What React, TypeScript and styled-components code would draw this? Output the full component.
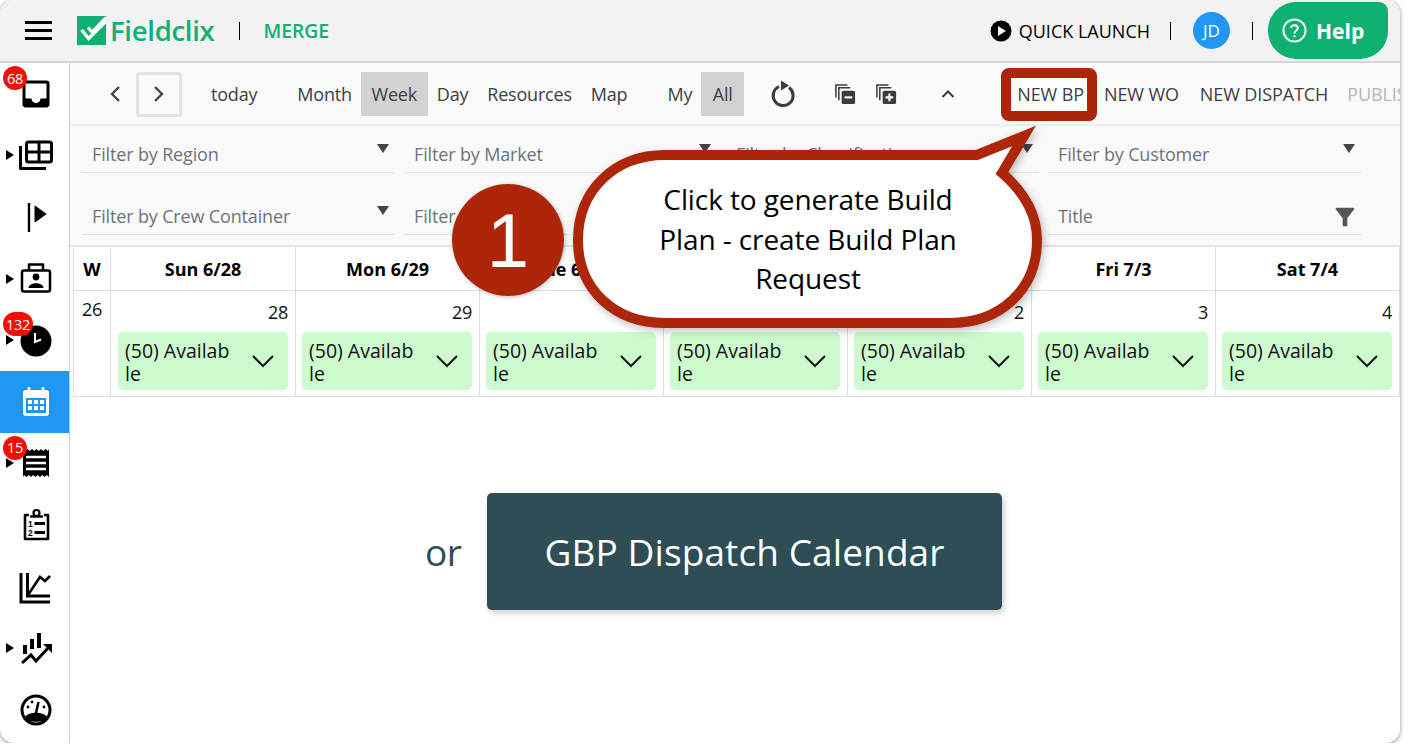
import React from "react";
import styled, { createGlobalStyle } from "styled-components";
import { MdInbox, MdFilterAlt } from "react-icons/md";

const GlobalStyle = createGlobalStyle`
  html, body { margin: 0; padding: 0; background: #fff; }
  body { font-family: "Open Sans", "Noto Sans", sans-serif; }
  * { box-sizing: border-box; }
`;

const GREEN = "#0fb072";
const RED = "#ae2609";

const days = [
  { label: "Sun 6/28", num: "28" },
  { label: "Mon 6/29", num: "29" },
  { label: "Tue 6/30", num: "30" },
  { label: "Wed 7/1", num: "1" },
  { label: "Thu 7/2", num: "2" },
  { label: "Fri 7/3", num: "3" },
  { label: "Sat 7/4", num: "4" },
];

const filters = [
  "Filter by Region",
  "Filter by Market",
  "Filter by Classification",
  "Filter by Customer",
  "Filter by Crew Container",
  "Filter by Manager",
  "Filter by Status",
];

const Icon: React.FC<{ children: React.ReactNode; color?: string }> = ({ children, color = "#000" }) => (
  <svg width="36" height="36" viewBox="0 0 36 36" fill="none" stroke={color} strokeWidth="3" strokeLinejoin="round">
    {children}
  </svg>
);

const sideItems = [
  { key: "inbox", badge: "68", icon: <MdInbox size={36} color="#000" /> },
  {
    key: "grid",
    caret: true,
    icon: (
      <Icon>
        <rect x="8.5" y="5" width="25" height="20" rx="2" />
        <path d="M8.5 15H33.5M21 5V25" />
        <path d="M2.5 9V31.5H28" />
      </Icon>
    ),
  },
  {
    key: "flag",
    icon: (
      <Icon>
        <path d="M11 4V33" strokeWidth="2.4" />
        <path d="M17 7L28 15L17 23Z" fill="#000" strokeWidth="1" />
      </Icon>
    ),
  },
  {
    key: "badge",
    caret: true,
    icon: (
      <Icon>
        <rect x="4" y="9.5" width="28" height="21" rx="2" strokeWidth="2.5" />
        <path d="M11 9.5V3.5H25V9.5" strokeWidth="2.5" />
        <circle cx="18" cy="16" r="3.4" fill="#000" stroke="none" />
        <path d="M10.5 27C10.5 20.5 25.5 20.5 25.5 27Z" fill="#000" stroke="none" />
      </Icon>
    ),
  },
  {
    key: "clock",
    caret: true,
    badge: "132",
    icon: (
      <Icon>
        <circle cx="18" cy="19" r="15.5" fill="#000" stroke="none" />
        <path d="M17 11V20L23 17.5" stroke="#fff" strokeWidth="2" strokeLinejoin="miter" />
      </Icon>
    ),
  },
  {
    key: "calendar",
    active: true,
    icon: (
      <Icon color="#fff">
        <rect x="5" y="6" width="26" height="26" rx="3" fill="#fff" stroke="none" />
        <path d="M11 3V8M25 3V8" strokeWidth="2.5" />
        <path d="M8 14H28V29H8Z" fill="#2196f3" stroke="none" />
        <path
          d="M10 16h4v4h-4zM16 16h4v4h-4zM22 16h4v4h-4zM10 22h4v4h-4zM16 22h4v4h-4zM22 22h4v4h-4z"
          fill="#fff"
          stroke="none"
        />
      </Icon>
    ),
  },
  {
    key: "receipt",
    caret: true,
    badge: "15",
    icon: (
      <Icon>
        <path
          d="M5 4l2.25 2 2.25-2 2.25 2 2.25-2 2.25 2 2.25-2 2.25 2 2.25-2 2.25 2 2.25-2 2.25 2L31 4V32l-2.25-2-2.25 2-2.25-2-2.25 2-2.25-2-2.25 2-2.25-2-2.25 2-2.25-2-2.25 2-2.25-2L5 32Z"
          fill="#000"
          stroke="none"
        />
        <path d="M8 12H28M8 18H28M8 24H28" stroke="#fff" strokeWidth="2.5" />
      </Icon>
    ),
  },
  {
    key: "clipboard",
    icon: (
      <Icon>
        <path d="M11 8H7V32H30V8H26" strokeWidth="2.6" />
        <circle cx="18.5" cy="6" r="3" strokeWidth="2.2" />
        <path d="M12 9.5H25" strokeWidth="2.4" />
        <text x="10" y="19.5" fontFamily="Liberation Sans" fontWeight="700" fontSize="8.5" fill="#000" stroke="none">1</text>
        <text x="10" y="28.5" fontFamily="Liberation Sans" fontWeight="700" fontSize="8.5" fill="#000" stroke="none">2</text>
        <path d="M16.5 16.5H27M16.5 25.5H27" strokeWidth="3" />
      </Icon>
    ),
  },
  {
    key: "chart",
    icon: (
      <Icon>
        <path d="M3 4V33H32" strokeLinejoin="miter" />
        <path d="M9.5 4V27H32" strokeLinejoin="miter" />
        <path d="M10 26L22 8L27 12L32 7" strokeLinejoin="miter" strokeWidth="2.6" />
      </Icon>
    ),
  },
  {
    key: "trend",
    caret: true,
    icon: (
      <Icon>
        <path d="M7 15V24M14 9V19M21 3V18" strokeWidth="4" strokeLinejoin="miter" />
        <path d="M4 33L13 25L18 31L31 17" strokeWidth="3" strokeLinejoin="miter" />
        <path d="M25 14H34V23Z" fill="#000" stroke="none" />
      </Icon>
    ),
  },
  {
    key: "gauge",
    icon: (
      <Icon>
        <circle cx="18" cy="18" r="14" />
        <path d="M6 26C10 19 26 19 30 26C26 31 10 31 6 26Z" fill="#000" stroke="none" />
        <path d="M18 21L20.5 10" strokeWidth="2.5" />
        <circle cx="10" cy="15" r="1.4" fill="#000" stroke="none" />
        <circle cx="14" cy="10" r="1.4" fill="#000" stroke="none" />
        <circle cx="26" cy="15" r="1.4" fill="#000" stroke="none" />
      </Icon>
    ),
  },
];

export default function App() {
  return (
    <>
      <GlobalStyle />
      <Window>
        <Header>
          <HeaderLeft>
            <Hamburger>
              <span />
              <span />
              <span />
            </Hamburger>
            <svg width="29" height="29" viewBox="0 0 29 29">
              <rect width="29" height="29" fill={GREEN} />
              <path d="M4.5 14L11.7 22.5L29 5" fill="none" stroke="#fff" strokeWidth="3.4" />
              <path d="M11 11.5L15 16L29 1.5" fill="none" stroke="#fff" strokeWidth="3" />
            </svg>
            <Brand>Fieldclix</Brand>
            <Divider $left={25} $right={23} />
            <Merge>MERGE</Merge>
          </HeaderLeft>
          <HeaderRight>
            <svg width="22" height="22" viewBox="0 0 22 22">
              <circle cx="11" cy="11" r="10.5" fill="#000" />
              <path d="M8 6L16 11L8 16Z" fill="#f2f2f2" />
            </svg>
            <QuickLaunch>QUICK LAUNCH</QuickLaunch>
            <Divider $left={20} $right={22} />
            <Avatar>JD</Avatar>
            <Divider $left={22} $right={15} />
            <HelpButton>
              <svg width="25" height="25" viewBox="0 0 26 26" fill="none" stroke="#fff" strokeWidth="2">
                <circle cx="13" cy="13" r="11.5" />
                <path d="M9.5 10.5C9.5 6.5 16.5 6.5 16.5 10.5C16.5 13 13 13 13 16" />
                <path d="M13 18V20" />
              </svg>
              Help
            </HelpButton>
          </HeaderRight>
        </Header>
        <Body>
          <Sidebar>
            {sideItems.map((item) => (
              <SideItem key={item.key} $active={item.active} $caret={item.caret}>
                {item.badge && <Badge>{item.badge}</Badge>}
                {item.icon}
              </SideItem>
            ))}
          </Sidebar>
          <Main>
            <Toolbar>
              <NavIcon>
                <svg width="14" height="18" viewBox="0 0 14 18" fill="none" stroke="#444" strokeWidth="2.4">
                  <path d="M11 2L4 9L11 16" />
                </svg>
              </NavIcon>
              <NextBox>
                <svg width="14" height="18" viewBox="0 0 14 18" fill="none" stroke="#444" strokeWidth="2.4">
                  <path d="M3 2L10 9L3 16" />
                </svg>
              </NextBox>
              <ToolText $ml={29}>today</ToolText>
              <ToolText $ml={40}>Month</ToolText>
              <ToolToggle $ml={9} $w={67}>Week</ToolToggle>
              <ToolText $ml={9}>Day</ToolText>
              <ToolText $ml={19}>Resources</ToolText>
              <ToolText $ml={19}>Map</ToolText>
              <ToolText $ml={40}>My</ToolText>
              <ToolToggle $ml={9} $w={43}>All</ToolToggle>
              <ToolGlyph $ml={26}>
                <svg width="26" height="28" viewBox="0 0 26 28" fill="none" stroke="#3c3c3c" strokeWidth="3">
                  <path d="M9 6.5A10 10 0 1 0 19 7.5" />
                  <path d="M11 0.5L19 5.5L11 10.5Z" fill="#3c3c3c" stroke="none" />
                </svg>
              </ToolGlyph>
              <ToolGlyph $ml={38}>
                <svg width="23" height="23" viewBox="0 0 24 24" fill="none" stroke="#3c3c3c" strokeWidth="1.6">
                  <path d="M14 2H2V15" />
                  <path d="M17 5H5V18" />
                  <rect x="8" y="8" width="14" height="14" rx="2" fill="#3c3c3c" stroke="none" />
                  <path d="M11 15H19" stroke="#fff" strokeWidth="2.2" />
                </svg>
              </ToolGlyph>
              <ToolGlyph $ml={18}>
                <svg width="23" height="23" viewBox="0 0 24 24" fill="none" stroke="#3c3c3c" strokeWidth="1.6">
                  <path d="M14 2H2V15" />
                  <path d="M17 5H5V18" />
                  <rect x="8" y="8" width="14" height="14" rx="2" fill="#3c3c3c" stroke="none" />
                  <path d="M11 15H19M15 11V19" stroke="#fff" strokeWidth="2.2" />
                </svg>
              </ToolGlyph>
              <ToolGlyph $ml={42}>
                <svg width="16" height="12" viewBox="0 0 16 12" fill="none" stroke="#3c3c3c" strokeWidth="2">
                  <path d="M2.5 9L8 3.5L13.5 9" />
                </svg>
              </ToolGlyph>
              <ActionText $ml={61} $highlight>NEW BP</ActionText>
              <ActionText $ml={20}>NEW WO</ActionText>
              <ActionText $ml={21}>NEW DISPATCH</ActionText>
              <ActionText $ml={19} $disabled>PUBLISH</ActionText>
            </Toolbar>
            <Filters>
              {filters.map((f) => (
                <FilterField key={f}>
                  <span>{f}</span>
                  <FilterCaret />
                </FilterField>
              ))}
              <FilterField>
                <span>Title</span>
                <FilterGlyph>
                  <MdFilterAlt size={28} color="#555" />
                </FilterGlyph>
              </FilterField>
            </Filters>
            <Calendar>
              <HeadCell>W</HeadCell>
              {days.map((d) => (
                <HeadCell key={d.label}>{d.label}</HeadCell>
              ))}
              <WeekCell>26</WeekCell>
              {days.map((d) => (
                <DayCell key={d.label}>
                  <DayNum>{d.num}</DayNum>
                  <Chip>
                    <ChipText>(50) Available</ChipText>
                    <svg width="24" height="14" viewBox="0 0 24 14" fill="none" stroke="#111" strokeWidth="2">
                      <path d="M2 2L12 12L22 2" />
                    </svg>
                  </Chip>
                </DayCell>
              ))}
            </Calendar>
            <Cta>
              <Or>or</Or>
              <GbpButton>GBP Dispatch Calendar</GbpButton>
            </Cta>
          </Main>
        </Body>
        <StepCircle>1</StepCircle>
        <Callout>
          <svg width="490" height="220" viewBox="570 118 490 220">
            <path
              d="M665 155H977L1024 136L1002 173C1024 192 1037 214 1037 240C1037 290 1000 323 950 323H665C615 323 578 290 578 240C578 190 615 155 665 155Z"
              fill="#fff"
              stroke={RED}
              strokeWidth="10"
              strokeLinejoin="miter"
              strokeMiterlimit="10"
            />
          </svg>
          <CalloutText>
            Click to generate Build
            <br />
            Plan - create Build Plan
            <br />
            Request
          </CalloutText>
        </Callout>
      </Window>
    </>
  );
}

const Window = styled.div`
  position: relative;
  width: 1400px;
  height: 743px;
  background: #fff;
  border-radius: 14px;
  overflow: hidden;
  box-shadow: 0 1px 4px rgba(0, 0, 0, 0.45);
`;

const Header = styled.header`
  height: 63px;
  background: #f2f2f2;
  border-bottom: 2px solid #d6d6d6;
  display: flex;
  align-items: center;
  justify-content: space-between;
  padding-left: 25px;
`;

const HeaderLeft = styled.div`
  display: flex;
  align-items: center;
`;

const HeaderRight = styled.div`
  display: flex;
  align-items: center;
  padding-right: 12px;
`;

const Hamburger = styled.div`
  width: 27px;
  margin-right: 25px;
  display: flex;
  flex-direction: column;
  gap: 5px;
  span {
    height: 3px;
    background: #000;
  }
`;

const Brand = styled.div`
  margin-left: 4px;
  color: ${GREEN};
  font-size: 27.5px;
  font-weight: 600;
  letter-spacing: -0.3px;
`;

const Merge = styled.div`
  color: ${GREEN};
  font-size: 19.3px;
  font-weight: 600;
`;

const Divider = styled.div<{ $left: number; $right: number }>`
  width: 1px;
  height: 18px;
  background: #000;
  margin: 0 ${(p) => p.$right}px 0 ${(p) => p.$left}px;
`;

const QuickLaunch = styled.div`
  margin-left: 7px;
  font-size: 18px;
  color: #000;
`;

const Avatar = styled.div`
  width: 37px;
  height: 37px;
  border-radius: 50%;
  background: #2196f3;
  color: #fff;
  font-size: 17px;
  display: flex;
  align-items: center;
  justify-content: center;
`;

const HelpButton = styled.div`
  width: 120px;
  height: 57px;
  background: ${GREEN};
  border-radius: 28px 9px 28px 28px;
  color: #fff;
  font-size: 21px;
  font-weight: 700;
  display: flex;
  align-items: center;
  padding-left: 14px;
  gap: 9px;
`;

const Body = styled.div`
  display: flex;
  height: 680px;
`;

const Sidebar = styled.nav`
  width: 70px;
  flex: none;
  border-right: 1px solid #ccc;
`;

const SideItem = styled.div<{ $active?: boolean; $caret?: boolean }>`
  position: relative;
  height: 61.6px;
  display: flex;
  align-items: center;
  justify-content: center;
  padding-left: 3px;
  background: ${(p) => (p.$active ? "#2196f3" : "transparent")};
  &::before {
    content: "";
    display: ${(p) => (p.$caret ? "block" : "none")};
    position: absolute;
    left: 6px;
    top: 50%;
    margin-top: -5px;
    border-left: 8px solid #000;
    border-top: 5px solid transparent;
    border-bottom: 5px solid transparent;
  }
`;

const Badge = styled.span`
  position: absolute;
  left: 3px;
  top: 3px;
  min-width: 24px;
  height: 24px;
  padding: 0 3px;
  z-index: 1;
  border-radius: 12px;
  background: #f01005;
  color: #fff;
  font-size: 14.5px;
  display: flex;
  align-items: center;
  justify-content: center;
  letter-spacing: -0.3px;
`;

const Main = styled.main`
  flex: 1;
  min-width: 0;
  overflow: hidden;
`;

const Toolbar = styled.div`
  height: 63px;
  background: #fafafa;
  border-bottom: 2px solid #eee;
  display: flex;
  align-items: center;
  padding: 1px 0 0 36px;
  white-space: nowrap;
  overflow: hidden;
  color: #3c4043;
  font-size: 18px;
  > * {
    flex: none;
  }
`;

const NavIcon = styled.div`
  width: 18px;
  display: flex;
  justify-content: center;
`;

const NextBox = styled.div`
  width: 46px;
  height: 45px;
  margin-left: 12px;
  border: 3px solid #e3e3e3;
  border-radius: 3px;
  display: flex;
  align-items: center;
  justify-content: center;
`;

const ToolText = styled.div<{ $ml: number }>`
  margin-left: ${(p) => p.$ml}px;
  letter-spacing: -0.2px;
`;

const ToolToggle = styled.div<{ $ml: number; $w: number }>`
  margin-left: ${(p) => p.$ml}px;
  width: ${(p) => p.$w}px;
  height: 44px;
  background: #d2d2d2;
  display: flex;
  align-items: center;
  justify-content: center;
  letter-spacing: -0.2px;
`;

const ToolGlyph = styled.div<{ $ml: number }>`
  margin-left: ${(p) => p.$ml}px;
  display: flex;
`;

const ActionText = styled.div<{ $ml: number; $disabled?: boolean; $highlight?: boolean }>`
  position: relative;
  margin-left: ${(p) => p.$ml}px;
  letter-spacing: -0.1px;
  color: ${(p) => (p.$disabled ? "#b5b5b5" : "#3c4043")};
  z-index: ${(p) => (p.$highlight ? 1 : "auto")};
  &::before {
    content: "";
    display: ${(p) => (p.$highlight ? "block" : "none")};
    position: absolute;
    left: -16px;
    right: -13px;
    top: -14px;
    bottom: -15px;
    background: #fff;
    border: 10px solid ${RED};
    border-radius: 8px;
    z-index: -1;
  }
`;

const Filters = styled.div`
  height: 121px;
  background: #fafafa;
  border-bottom: 2px solid #e4e4e4;
  display: grid;
  grid-template-columns: repeat(4, 313px);
  column-gap: 9px;
  grid-auto-rows: 38px;
  row-gap: 24px;
  padding: 9px 0 0 12px;
`;

const FilterField = styled.div`
  position: relative;
  border-bottom: 1px solid #e2e2e2;
  display: flex;
  align-items: center;
  padding: 1px 0 0 10px;
  color: #6f7378;
  font-size: 18px;
  letter-spacing: -0.15px;
`;

const FilterCaret = styled.i`
  position: absolute;
  right: 6px;
  top: 9px;
  border-top: 9px solid #444;
  border-left: 6px solid transparent;
  border-right: 6px solid transparent;
`;

const FilterGlyph = styled.div`
  position: absolute;
  right: 2px;
  top: 6px;
  display: flex;
`;

const Calendar = styled.div`
  margin-left: 3px;
  width: 1327px;
  display: grid;
  grid-template-columns: 37px 185px repeat(6, 184px);
  grid-template-rows: 44px 105px;
  border-left: 1px solid #ddd;
  border-bottom: 1px solid #ddd;
`;

const HeadCell = styled.div`
  border-right: 1px solid #ddd;
  border-bottom: 1px solid #ddd;
  display: flex;
  align-items: center;
  justify-content: center;
  font-size: 18px;
  font-weight: 700;
  color: #000;
`;

const WeekCell = styled.div`
  border-right: 1px solid #ddd;
  padding-top: 6px;
  text-align: center;
  font-size: 18px;
  letter-spacing: -0.3px;
  color: #111;
`;

const DayCell = styled.div`
  border-right: 1px solid #ddd;
  padding: 9px 0 0 6px;
  &:nth-child(10) {
    padding-left: 7px;
  }
`;

const DayNum = styled.div`
  width: 170px;
  height: 32px;
  text-align: right;
  font-size: 18px;
  letter-spacing: -0.3px;
  color: #111;
`;

const Chip = styled.div`
  width: 170px;
  height: 58px;
  background: #cdfbcd;
  border-radius: 5px;
  padding: 7px 13px 0 7px;
  display: flex;
  justify-content: space-between;
  align-items: flex-start;
  svg {
    margin-top: 15px;
    flex: none;
  }
`;

const ChipText = styled.div`
  width: 107px;
  font-size: 19.5px;
  line-height: 23px;
  color: #111;
  word-break: break-all;
`;

const Cta = styled.div`
  display: flex;
  align-items: center;
  padding: 96px 0 0 355px;
`;

const Or = styled.div`
  width: 62px;
  font-size: 37px;
  color: #2f4d55;
  letter-spacing: -0.5px;
`;

const GbpButton = styled.div`
  width: 515px;
  height: 117px;
  background: #2f4d55;
  border-radius: 5px;
  color: #fff;
  font-size: 37px;
  letter-spacing: 0.1px;
  display: flex;
  align-items: center;
  justify-content: center;
  box-shadow: 2px 3px 6px rgba(0, 0, 0, 0.2);
`;

const StepCircle = styled.div`
  position: absolute;
  left: 452px;
  top: 184px;
  width: 112px;
  height: 112px;
  border-radius: 50%;
  background: ${RED};
  color: #fff;
  font-family: "Liberation Sans", sans-serif;
  font-size: 76px;
  display: flex;
  align-items: center;
  justify-content: center;
  box-shadow: 1px 1px 4px rgba(0, 0, 0, 0.25);
  z-index: 2;
`;

const Callout = styled.div`
  position: absolute;
  left: 570px;
  top: 118px;
  width: 490px;
  height: 220px;
  z-index: 3;
  svg {
    display: block;
    filter: drop-shadow(2px 3px 4px rgba(0, 0, 0, 0.25));
  }
`;

const CalloutText = styled.div`
  position: absolute;
  left: 0;
  top: 62px;
  width: 476px;
  text-align: center;
  font-size: 28px;
  line-height: 39.5px;
  letter-spacing: -0.1px;
  color: #000;
`;
